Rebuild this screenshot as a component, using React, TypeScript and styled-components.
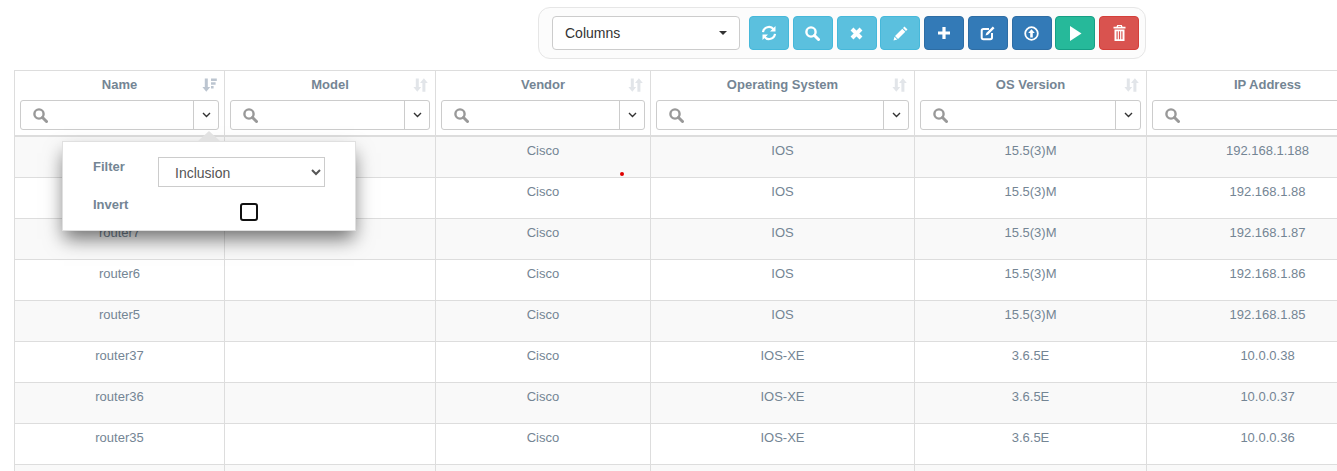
import React from 'react';
import styled, { createGlobalStyle } from 'styled-components';

const GlobalStyle = createGlobalStyle`
  html, body {
    margin: 0;
    padding: 0;
    background: #fff;
    overflow: hidden;
    height: 471px;
    font-family: "Liberation Sans", Arial, sans-serif;
    font-size: 13px;
  }
  * { box-sizing: border-box; }
`;

const textColor = '#748594';

const Page = styled.div`
  width: 1337px;
  height: 471px;
  overflow: hidden;
  padding-top: 7px;
`;

const ToolbarRow = styled.div`
  display: flex;
  padding-left: 538px;
  margin-bottom: 11px;
`;

const Toolbar = styled.div`
  display: flex;
  align-items: center;
  gap: 3.75px;
  width: 608px;
  height: 52px;
  padding: 0 0 0 13px;
  border: 1px solid #e6e6e6;
  border-radius: 12px;
  background: #fcfcfc;
`;

const ColumnsPicker = styled.div`
  display: flex;
  align-items: center;
  justify-content: space-between;
  width: 188px;
  height: 34px;
  margin-right: 5.25px;
  padding: 0 12px;
  background: #fff;
  border: 1px solid #ccc;
  border-radius: 4px;
  color: #333;
  font-size: 14px;
`;

const Caret = styled.span`
  width: 0;
  height: 0;
  border-left: 4px solid transparent;
  border-right: 4px solid transparent;
  border-top: 4px solid #333;
`;

const tones = {
  info: ['#5bc0de', '#46b8da'],
  primary: ['#337ab7', '#2e6da4'],
  success: ['#26b99a', '#169f85'],
  danger: ['#d9534f', '#d43f3a'],
};

const ToolButton = styled.button<{ $tone: keyof typeof tones }>`
  display: flex;
  align-items: center;
  justify-content: center;
  flex: none;
  width: 40px;
  height: 34px;
  padding: 0;
  color: #fff;
  background: ${p => tones[p.$tone][0]};
  border: 1px solid ${p => tones[p.$tone][1]};
  border-radius: 4px;
`;

const GridFrame = styled.div`
  margin-left: 14px;
  width: 1400px;
`;

const cols = '210px 211px 215px 264px 232px 242px';

const HeaderRow = styled.div`
  display: grid;
  grid-template-columns: ${cols};
  height: 67px;
  border-top: 1px solid #ddd;
  border-left: 1px solid #ddd;
  border-bottom: 2px solid #ddd;
`;

const HeaderCell = styled.div`
  position: relative;
  padding: 0 5px;
  border-right: 1px solid #ddd;
`;

const HeaderTitle = styled.div`
  height: 29px;
  line-height: 28px;
  text-align: center;
  color: ${textColor};
  font-size: 13px;
  font-weight: 700;
`;

const SortMark = styled.span`
  position: absolute;
  top: 7px;
  right: 7px;
  display: flex;
  color: #e2e5e9;
`;

const FilterBox = styled.div`
  display: flex;
  height: 30px;
  background: #fff;
  border: 1px solid #ccc;
  border-radius: 3px;
`;

const FilterInput = styled.div`
  flex: 1;
  display: flex;
  align-items: center;
  padding-left: 12px;
  color: #999;
`;

const FilterToggle = styled.div`
  width: 25px;
  display: flex;
  align-items: center;
  justify-content: center;
  border-left: 1px solid #ccc;
`;

const Row = styled.div<{ $striped: boolean }>`
  display: grid;
  grid-template-columns: ${cols};
  height: 41px;
  border-left: 1px solid #ddd;
  border-bottom: 1px solid #ddd;
  background: ${p => (p.$striped ? '#f9f9f9' : '#fff')};
`;

const Cell = styled.div`
  padding-top: 6px;
  line-height: 15px;
  text-align: center;
  color: ${textColor};
  font-size: 13px;
  border-right: 1px solid #ddd;
`;

const Popover = styled.div`
  position: absolute;
  left: 62px;
  top: 141px;
  width: 294px;
  height: 90px;
  background: #fff;
  border: 1px solid #e0e0e0;
  box-shadow: 0 10px 18px -2px rgba(0, 0, 0, 0.55);
  display: grid;
  grid-template-columns: 65px 1fr;
  grid-template-rows: 38px 1fr;
  padding: 15px 0 0 30px;
`;

const PopoverArrow = styled.div`
  position: absolute;
  left: 135px;
  top: -11px;
  width: 0;
  height: 0;
  border-left: 11px solid transparent;
  border-right: 11px solid transparent;
  border-bottom: 10px solid #e2e2e2;
`;

const PopLabel = styled.label`
  color: ${textColor};
  font-size: 13px;
  font-weight: 700;
  line-height: 19px;
`;

const PopSelect = styled.select`
  width: 167px;
  height: 30px;
  padding: 2px 12px 0;
  border: 1px solid #ccc;
  border-radius: 0;
  background: #fff;
  color: #555;
  font: 14px "Liberation Sans", Arial, sans-serif;
`;

const CheckCell = styled.div`
  padding-left: 82px;
  padding-top: 8px;
`;

const Check = styled.div`
  width: 18px;
  height: 18px;
  background: #fff;
  border: 2px solid #111;
  border-radius: 3px;
`;

const Dot = styled.span`
  position: absolute;
  left: 620px;
  top: 172px;
  width: 4px;
  height: 4px;
  border-radius: 50%;
  background: #e00000;
`;

const Refresh = () => (
  <svg width="16" height="16" viewBox="0 0 16 16" fill="none" stroke="currentColor" strokeWidth="2.200">
    <path d="M2 7.200A6 6 0 0 1 12.600 4.200" />
    <path d="M14 8.800A6 6 0 0 1 3.400 11.800" />
    <path d="M14.500 1v5.500H9zM1.500 15V9.500H7z" fill="currentColor" stroke="none" />
  </svg>
);

const Search = () => (
  <svg width="15" height="15" viewBox="0 0 15 15" fill="none" stroke="currentColor" strokeWidth="2.400">
    <circle cx="6" cy="6" r="4.600" />
    <path d="M9.500 9.500l4 4" strokeWidth="3" strokeLinecap="round" />
  </svg>
);

const Cross = () => (
  <svg width="13" height="13" viewBox="0 0 13 13" stroke="currentColor" strokeWidth="4">
    <path d="M2 2l9 9M11 2l-9 9" />
  </svg>
);

const Pencil = () => (
  <svg width="15" height="15" viewBox="0 0 15 15" fill="currentColor">
    <path d="M11.500 .5l3 3-1.500 1.500-3-3zM9.300 2.700l3 3-7.300 7.300-3-3zM1.500 10.700l2.800 2.800-3.800 1z" />
  </svg>
);

const Plus = () => (
  <svg width="14" height="14" viewBox="0 0 14 14" fill="currentColor">
    <path d="M5.400 1h3.200v4.400H13v3.200H8.600V13H5.400V8.600H1V5.400h4.400z" />
  </svg>
);

const EditBox = () => (
  <svg width="15" height="15" viewBox="0 0 15 15" fill="none" stroke="currentColor">
    <path d="M9 3H3.500A1.800 1.800 0 0 0 1.700 4.800v6.700A1.800 1.800 0 0 0 3.500 13.300h6.700a1.800 1.800 0 0 0 1.800-1.800V7" strokeWidth="2" />
    <path d="M12.800 .5l1.700 1.700-6.500 6.500-2.500.8.800-2.500z" fill="currentColor" stroke="none" />
  </svg>
);

const Upload = () => (
  <svg width="15" height="15" viewBox="0 0 15 15" fill="none" stroke="currentColor">
    <circle cx="7.500" cy="7.500" r="6.300" strokeWidth="1.800" />
    <path d="M7.500 3.200l3.300 3.800H8.800v4.500H6.200V7H4.200z" fill="currentColor" stroke="none" />
  </svg>
);

const Play = () => (
  <svg width="13" height="15" viewBox="0 0 13 15" fill="currentColor">
    <path d="M1 0L12.500 7.500 1 15z" />
  </svg>
);

const Trash = () => (
  <svg width="13" height="16" viewBox="0 0 13 16" fill="currentColor">
    <path d="M4.200 0h4.600l.7 1.800h3v1.700H.5V1.800h3zM5 1.800h3L7.800 1H5.200zM1.500 4.500h10V16h-10zM3.500 6.200v8h1.200v-8zM5.900 6.200v8h1.200v-8zM8.300 6.200v8h1.200v-8z" fillRule="evenodd" />
  </svg>
);

const SortIcon = ({ active }: { active?: boolean }) => (
  <svg width="15" height="14" viewBox="0 0 15 14" fill={active ? '#bcc5d0' : 'currentColor'}>
    <path d="M2.800 .5h3v8.500h2.400L4.300 13.800.4 9h2.400z" />
    {active ? (
      <path d="M9 .5h5.800v2.400H9zM9 4.300h4.600v2.400H9zM9 8.100h2.600v2.400H9z" />
    ) : (
      <path d="M9.400 5H7l3.900-4.800L14.800 5h-2.400v8.800h-3z" />
    )}
  </svg>
);

const Chevron = () => (
  <svg width="9" height="6" viewBox="0 0 9 6" fill="none" stroke="#333" strokeWidth="1.400">
    <path d="M1 1l3.500 3.500L8 1" />
  </svg>
);

const headers = ['Name', 'Model', 'Vendor', 'Operating System', 'OS Version', 'IP Address'];

const rows = [
  ['', '', 'Cisco', 'IOS', '15.5(3)M', '192.168.1.188'],
  ['', '', 'Cisco', 'IOS', '15.5(3)M', '192.168.1.88'],
  ['router7', '', 'Cisco', 'IOS', '15.5(3)M', '192.168.1.87'],
  ['router6', '', 'Cisco', 'IOS', '15.5(3)M', '192.168.1.86'],
  ['router5', '', 'Cisco', 'IOS', '15.5(3)M', '192.168.1.85'],
  ['router37', '', 'Cisco', 'IOS-XE', '3.6.5E', '10.0.0.38'],
  ['router36', '', 'Cisco', 'IOS-XE', '3.6.5E', '10.0.0.37'],
  ['router35', '', 'Cisco', 'IOS-XE', '3.6.5E', '10.0.0.36'],
  ['', '', '', '', '', ''],
];

export default function App() {
  return (
    <Page>
      <GlobalStyle />
      <ToolbarRow>
        <Toolbar>
          <ColumnsPicker>
            Columns
            <Caret />
          </ColumnsPicker>
          <ToolButton $tone="info"><Refresh /></ToolButton>
          <ToolButton $tone="info"><Search /></ToolButton>
          <ToolButton $tone="info"><Cross /></ToolButton>
          <ToolButton $tone="info"><Pencil /></ToolButton>
          <ToolButton $tone="primary"><Plus /></ToolButton>
          <ToolButton $tone="primary"><EditBox /></ToolButton>
          <ToolButton $tone="primary"><Upload /></ToolButton>
          <ToolButton $tone="success"><Play /></ToolButton>
          <ToolButton $tone="danger"><Trash /></ToolButton>
        </Toolbar>
      </ToolbarRow>
      <GridFrame>
        <HeaderRow>
          {headers.map((h, i) => (
            <HeaderCell key={h}>
              <HeaderTitle>{h}</HeaderTitle>
              {i < 5 && (
                <SortMark>
                  <SortIcon active={i === 0} />
                </SortMark>
              )}
              <FilterBox>
                <FilterInput><Search /></FilterInput>
                {i < 5 && <FilterToggle><Chevron /></FilterToggle>}
              </FilterBox>
            </HeaderCell>
          ))}
        </HeaderRow>
        {rows.map((r, i) => (
          <Row key={i} $striped={i % 2 === 0}>
            {r.map((c, j) => (
              <Cell key={j}>{c}</Cell>
            ))}
          </Row>
        ))}
      </GridFrame>
      <Dot />
      <Popover>
        <PopoverArrow />
        <PopLabel>Filter</PopLabel>
        <PopSelect defaultValue="Inclusion">
          <option>Inclusion</option>
          <option>Exclusion</option>
        </PopSelect>
        <PopLabel>Invert</PopLabel>
        <CheckCell><Check /></CheckCell>
      </Popover>
    </Page>
  );
}
